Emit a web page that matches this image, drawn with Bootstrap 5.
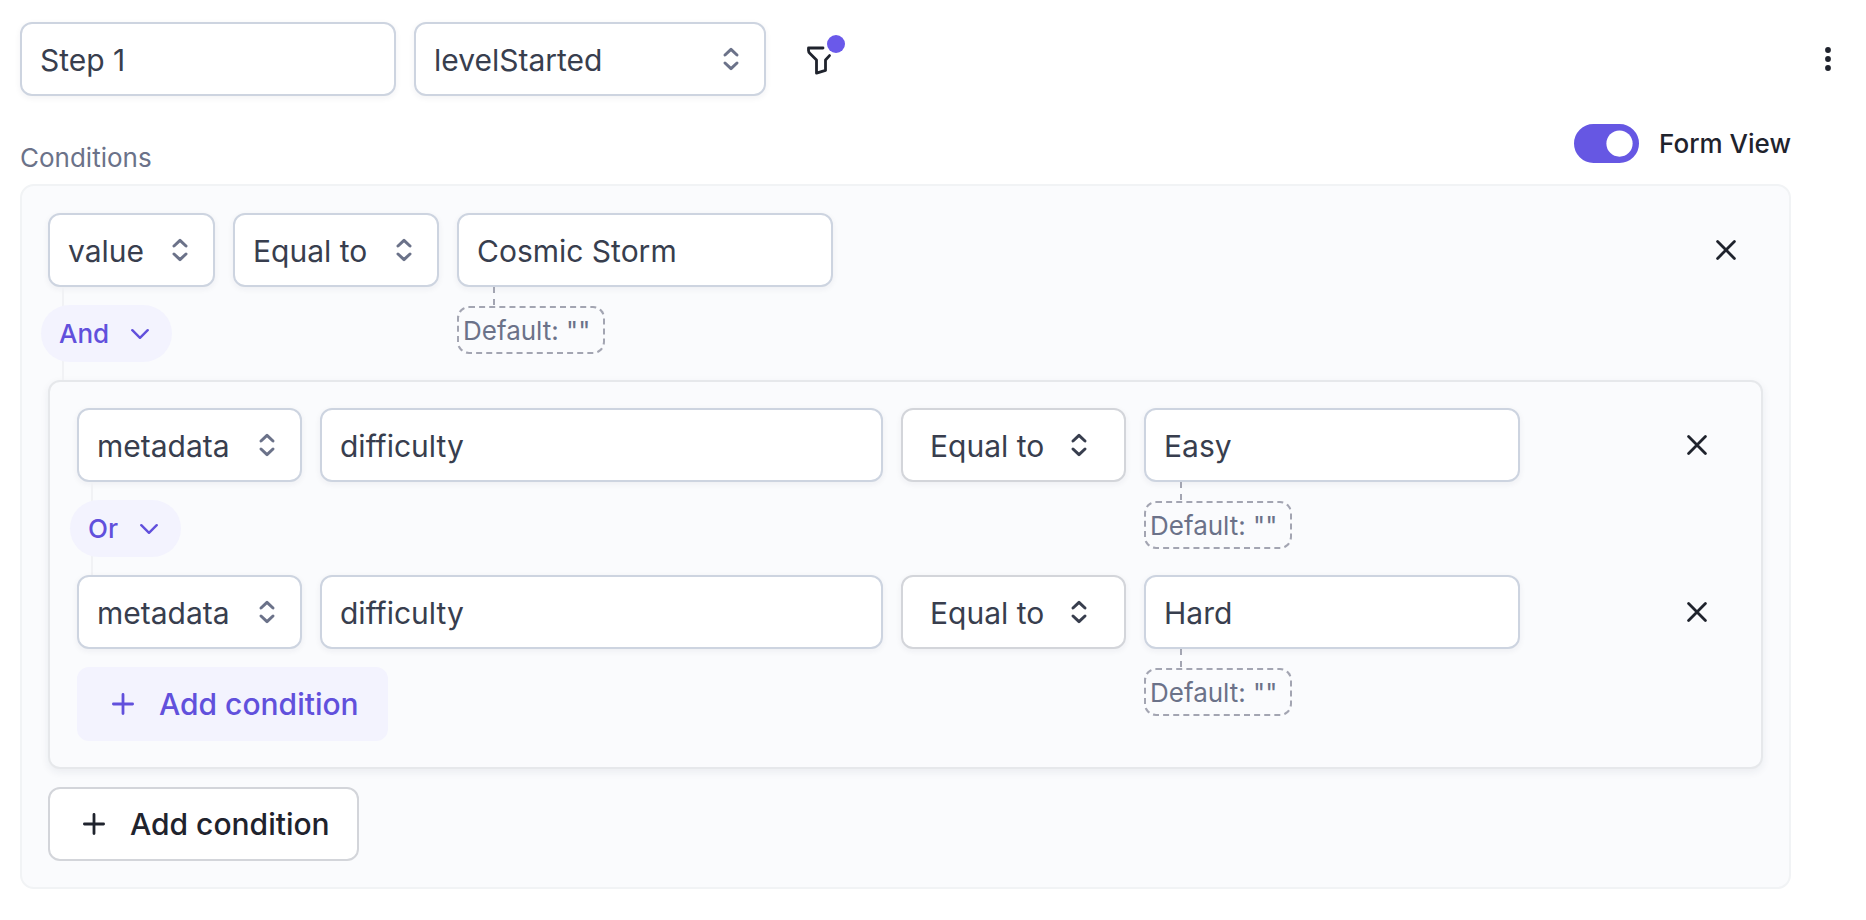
<!DOCTYPE html>
<html lang="en">
<head>
<meta charset="utf-8">
<meta name="viewport" content="width=device-width, initial-scale=1">
<title>Step conditions</title>
<link href="https://cdn.jsdelivr.net/npm/bootstrap@5.3.0/dist/css/bootstrap.min.css" rel="stylesheet">
<style>
  :root {
    --ink: #1f232d;
    --field-ink: #383e4e;
    --muted-ink: #6b7289;
    --line: #cdd4e0;
    --accent: #6150dc;
    --accent-soft: #f3f3fe;
    --gap: 18px;
  }
  body { font-family: Inter, "Liberation Sans", sans-serif; font-size: 30px; line-height: 40px; color: var(--ink); background: #fff; }
  svg { display: block; fill: none; stroke: currentColor; stroke-linecap: round; stroke-linejoin: round; flex: none; }
  .page { padding: 22px 20px; }
  .page-body { margin-right: 55px; }
  .gap-row { gap: var(--gap); }

  .form-control, .form-select, .btn-tall { height: 74px; border: 2px solid var(--line); border-radius: 12px; font-size: 30px; line-height: 40px; }
  .form-control, .form-select { padding: 2px 18px 0; color: var(--field-ink); background: #fff; box-shadow: 0 2px 6px rgba(30, 40, 70, .06); }
  .picker { position: relative; flex: 0 1 auto; }
  .picker svg { position: absolute; right: 26px; top: 25px; color: var(--muted-ink); pointer-events: none; }
  .picker-inset .form-select { padding-left: 27px; border-color: #d3d5da; }
  .picker-inset svg { right: 38px; color: var(--field-ink); }
  .w-event { width: 352px; }
  .w-value { width: 167px; }
  .w-meta { width: 225px; }
  .w-op { width: 206px; }
  .w-op-wide { width: 225px; }
  .w-text { width: 376px; }
  .w-key { width: 563px; }

  .icon-btn { padding: 0; border: 0; color: var(--ink); display: flex; align-items: center; justify-content: center; height: 74px; }
  .filter-btn { position: relative; width: 72px; }
  .filter-dot { position: absolute; left: 43px; top: 13px; width: 18px; height: 18px; border-radius: 50%; background: #6a59ea; }
  .more-btn { width: 37px; }
  .more-btn svg { fill: currentColor; stroke: none; }
  .close-btn { width: 74px; }

  .caption-row { height: 52px; margin: 28px 0 8px; font-size: 26px; line-height: 36px; }
  .caption-row .caption { color: var(--muted-ink); }
  .form-switch { min-height: 0; margin: 0; padding: 0; gap: 20px; }
  .form-switch .form-check-input { width: 65px; height: 39px; margin: 0; border: 2px solid #6657e3; border-radius: 20px; }
  .form-switch .form-check-input:checked { background-color: #6657e3; border-color: #6657e3; }

  .panel { padding: 27px 26px 26px; border: 2px solid #f1f3f5; border-radius: 14px; background: #fafbfd; }
  .panel-nested { padding: 26px 27px; border-color: #e6e8eb; box-shadow: 0 3px 8px rgba(30, 40, 70, .07); border-radius: 12px; }

  .joiner { position: relative; margin: var(--gap) 0; }
  .joiner::before { content: ""; position: absolute; left: 14px; top: -18px; bottom: -18px; width: 2px; background: #f1f2f5; }
  .joiner .btn { position: relative; margin-left: -7px; height: 57px; padding: 0 23px 0 18px; gap: 22px; border: 0; border-radius: 29px; background: var(--accent-soft); color: var(--accent); font-size: 26px; line-height: 36px; font-weight: 500; }

  .fallback { position: absolute; left: 0; top: 93px; height: 48px; width: 148px; padding: 5px 4px 3px; border: 2px dashed #a3a5b2; border-radius: 12px; color: var(--muted-ink); font-size: 26px; line-height: 36px; white-space: nowrap; }
  .fallback::before { content: ""; position: absolute; left: 34px; top: -21px; height: 18px; border-left: 2px dashed #a3a5b2; }

  .add-row { margin-top: var(--gap); }
  .btn-tall { display: inline-flex; align-items: center; gap: 25px; padding: 0 27px 0 33px; font-weight: 500; color: var(--ink); background: #fff; border-color: #d3d5da; }
  .btn-accent { color: var(--accent); background: var(--accent-soft); border-color: var(--accent-soft); }
</style>
</head>
<body>
<svg width="0" height="0" class="position-absolute" aria-hidden="true">
  <symbol id="i-sort" viewBox="0 0 18 24"><path d="M3 8 9 2.4 15 8M3 16 9 21.6 15 16" stroke-width="3"/></symbol>
  <symbol id="i-down" viewBox="0 0 18 12"><path d="M1.3 2.2 9 9.8 16.7 2.2" stroke-width="2.4"/></symbol>
  <symbol id="i-close" viewBox="0 0 20 20"><path d="M1.6 1.6 18.4 18.4M18.4 1.6 1.6 18.4" stroke-width="2.8"/></symbol>
  <symbol id="i-plus" viewBox="0 0 22 22"><path d="M11 1.4V20.600M1.400 11H20.600" stroke-width="2.8"/></symbol>
</svg>

<main class="page">
  <header class="d-flex align-items-center gap-row">
    <input class="form-control w-text" type="text" value="Step 1" aria-label="Step name">
    <div class="picker w-event">
      <select class="form-select" aria-label="Event"><option>levelStarted</option></select>
      <svg width="18" height="24"><use href="#i-sort"/></svg>
    </div>
    <button class="btn icon-btn filter-btn" type="button" aria-label="Filter">
      <svg width="72" height="74" viewBox="0 0 72 74" stroke-width="2.8"><path d="M39 26H24.500V28.500Q24.500 30.200 26 31.600L32.500 38V51.200L41.500 48.400V38L45.500 33.600"/></svg>
      <span class="filter-dot"></span>
    </button>
    <button class="btn icon-btn more-btn ms-auto" type="button" aria-label="More">
      <svg width="6" height="24" viewBox="0 0 6 24"><circle cx="3" cy="3" r="2.9"/><circle cx="3" cy="12" r="2.9"/><circle cx="3" cy="21" r="2.9"/></svg>
    </button>
  </header>

  <div class="page-body">
    <div class="caption-row d-flex justify-content-between">
      <span class="caption align-self-end">Conditions</span>
      <div class="form-check form-switch d-flex align-items-center align-self-start">
        <input class="form-check-input" type="checkbox" role="switch" id="formView" checked>
        <label class="form-check-label fw-medium" for="formView">Form View</label>
      </div>
    </div>

    <section class="panel">
      <div class="d-flex gap-row">
        <div class="picker w-value">
          <select class="form-select" aria-label="Property"><option>value</option></select>
          <svg width="18" height="24"><use href="#i-sort"/></svg>
        </div>
        <div class="picker w-op">
          <select class="form-select" aria-label="Operator"><option>Equal to</option></select>
          <svg width="18" height="24"><use href="#i-sort"/></svg>
        </div>
        <div class="position-relative w-text">
          <input class="form-control" type="text" value="Cosmic Storm" aria-label="Value">
          <span class="fallback">Default: ""</span>
        </div>
        <button class="btn icon-btn close-btn ms-auto" type="button" aria-label="Remove condition"><svg width="20" height="20"><use href="#i-close"/></svg></button>
      </div>

      <div class="joiner d-flex">
        <button class="btn d-inline-flex align-items-center" type="button">And <svg width="18" height="12"><use href="#i-down"/></svg></button>
      </div>

      <section class="panel panel-nested">
        <div class="d-flex gap-row">
          <div class="picker w-meta">
            <select class="form-select" aria-label="Property"><option>metadata</option></select>
            <svg width="18" height="24"><use href="#i-sort"/></svg>
          </div>
          <input class="form-control w-key" type="text" value="difficulty" aria-label="Metadata key">
          <div class="picker picker-inset w-op-wide">
            <select class="form-select" aria-label="Operator"><option>Equal to</option></select>
            <svg width="18" height="24"><use href="#i-sort"/></svg>
          </div>
          <div class="position-relative w-text">
            <input class="form-control" type="text" value="Easy" aria-label="Value">
            <span class="fallback">Default: ""</span>
          </div>
          <button class="btn icon-btn close-btn ms-auto" type="button" aria-label="Remove condition"><svg width="20" height="20"><use href="#i-close"/></svg></button>
        </div>

        <div class="joiner d-flex">
          <button class="btn d-inline-flex align-items-center" type="button">Or <svg width="18" height="12"><use href="#i-down"/></svg></button>
        </div>

        <div class="d-flex gap-row">
          <div class="picker w-meta">
            <select class="form-select" aria-label="Property"><option>metadata</option></select>
            <svg width="18" height="24"><use href="#i-sort"/></svg>
          </div>
          <input class="form-control w-key" type="text" value="difficulty" aria-label="Metadata key">
          <div class="picker picker-inset w-op-wide">
            <select class="form-select" aria-label="Operator"><option>Equal to</option></select>
            <svg width="18" height="24"><use href="#i-sort"/></svg>
          </div>
          <div class="position-relative w-text">
            <input class="form-control" type="text" value="Hard" aria-label="Value">
            <span class="fallback">Default: ""</span>
          </div>
          <button class="btn icon-btn close-btn ms-auto" type="button" aria-label="Remove condition"><svg width="20" height="20"><use href="#i-close"/></svg></button>
        </div>

        <div class="add-row d-flex">
          <button class="btn btn-tall btn-accent" type="button"><svg width="22" height="22"><use href="#i-plus"/></svg>Add condition</button>
        </div>
      </section>

      <div class="add-row d-flex">
        <button class="btn btn-tall" type="button"><svg width="22" height="22"><use href="#i-plus"/></svg>Add condition</button>
      </div>
    </section>
  </div>
</main>
<script src="https://cdn.jsdelivr.net/npm/bootstrap@5.3.0/dist/js/bootstrap.bundle.min.js"></script>
</body>
</html>
